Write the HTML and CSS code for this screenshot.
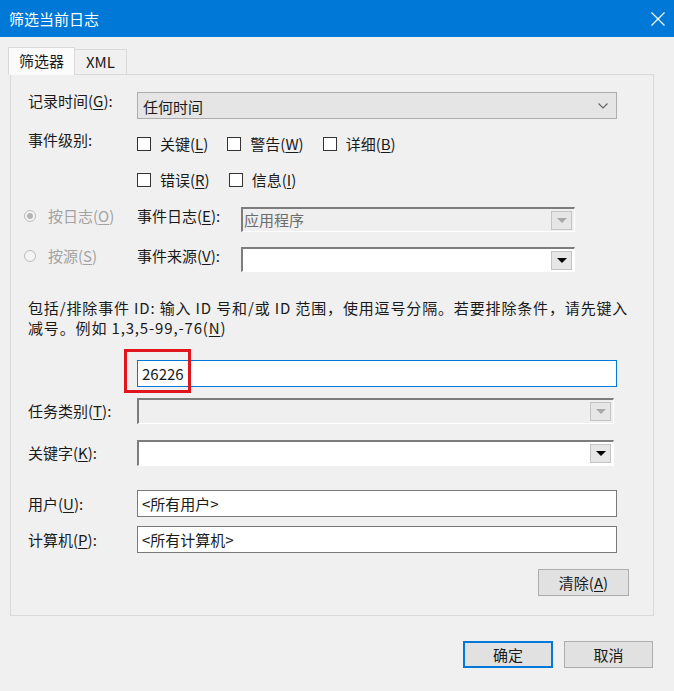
FILE: index.html
```html
<!DOCTYPE html>
<html lang="zh-CN">
<head>
<meta charset="utf-8">
<title>筛选当前日志</title>
<link rel="stylesheet" href="styles.css">
</head>
<body>
<div class="titlebar">
  <span class="title">筛选当前日志</span>
  <svg class="close" width="14" height="14" viewBox="0 0 14 14"><path d="M0.5 0.5 L13.5 13.5 M13.5 0.5 L0.5 13.5" stroke="#fff" stroke-width="1.2" fill="none"/></svg>
</div>
<div class="main">
  <div class="tabs">
    <div class="tab active">筛选器</div>
    <div class="tab">XML</div>
  </div>
  <div class="panel">
    <div class="row row-time">
      <span class="lbl">记录时间(<u>G</u>):</span>
      <div class="select">
        <span>任何时间</span>
        <svg width="10" height="6" viewBox="0 0 10 6"><path d="M0.5 0.5 L5 5 L9.5 0.5" stroke="#666" stroke-width="1.2" fill="none"/></svg>
      </div>
    </div>
    <div class="row row-levels">
      <span class="lbl lbl-levels">事件级别:</span>
      <div class="checks">
        <div class="check-row">
          <span class="check"><span class="box"></span><span>关键(<u>L</u>)</span></span>
          <span class="check"><span class="box"></span><span>警告(<u>W</u>)</span></span>
          <span class="check"><span class="box"></span><span>详细(<u>B</u>)</span></span>
        </div>
        <div class="check-row">
          <span class="check"><span class="box"></span><span>错误(<u>R</u>)</span></span>
          <span class="check"><span class="box"></span><span>信息(<u>I</u>)</span></span>
        </div>
      </div>
    </div>
    <div class="source">
      <div class="srow">
        <span class="radio"><span class="circle checked"></span><span>按日志(<u>O</u>)</span></span>
        <span class="slbl">事件日志(<u>E</u>):</span>
        <div class="combo combo-src disabled">
          <span class="combo-text">应用程序</span>
          <span class="arrow"><svg width="10" height="5" viewBox="0 0 10 5"><path d="M0 0 H10 L5 5 Z" fill="#a8a8a8"/></svg></span>
        </div>
      </div>
      <div class="srow">
        <span class="radio"><span class="circle"></span><span>按源(<u>S</u>)</span></span>
        <span class="slbl">事件来源(<u>V</u>):</span>
        <div class="combo combo-src">
          <span class="combo-text"></span>
          <span class="arrow"><svg width="10" height="5" viewBox="0 0 10 5"><path d="M0 0 H10 L5 5 Z" fill="#000"/></svg></span>
        </div>
      </div>
    </div>
    <p class="hint">包括/排除事件 ID: 输入 ID 号和/或 ID 范围，使用逗号分隔。若要排除条件，请先键入<br>减号。例如 1,3,5-99,-76(<u>N</u>)</p>
    <div class="row row-id">
      <div class="id-wrap">
        <div class="input focused">26226</div>
        <span class="highlight"></span>
      </div>
    </div>
    <div class="row row-task">
      <span class="lbl">任务类别(<u>T</u>):</span>
      <div class="combo combo-wide disabled">
        <span class="combo-text"></span>
        <span class="arrow"><svg width="10" height="5" viewBox="0 0 10 5"><path d="M0 0 H10 L5 5 Z" fill="#a8a8a8"/></svg></span>
      </div>
    </div>
    <div class="row row-keyword">
      <span class="lbl">关键字(<u>K</u>):</span>
      <div class="combo combo-wide">
        <span class="combo-text"></span>
        <span class="arrow"><svg width="10" height="5" viewBox="0 0 10 5"><path d="M0 0 H10 L5 5 Z" fill="#000"/></svg></span>
      </div>
    </div>
    <div class="row row-user">
      <span class="lbl">用户(<u>U</u>):</span>
      <div class="input">&lt;所有用户&gt;</div>
    </div>
    <div class="row row-computer">
      <span class="lbl">计算机(<u>P</u>):</span>
      <div class="input">&lt;所有计算机&gt;</div>
    </div>
    <div class="row row-clear">
      <button class="btn btn-clear">清除(<u>A</u>)</button>
    </div>
  </div>
  <div class="footer">
    <button class="btn btn-ok">确定</button>
    <button class="btn btn-cancel">取消</button>
  </div>
</div>
</body>
</html>
```
FILE: styles.css
```css
* { box-sizing: border-box; }
html, body { margin: 0; padding: 0; }
body {
  width: 674px;
  height: 691px;
  overflow: hidden;
  background: #f0f0f0;
  font-family: "Noto Sans CJK SC", "Noto Sans", sans-serif;
  font-size: 15px;
  line-height: 20px;
  color: #1a1a1a;
}
u { text-decoration: underline; text-underline-offset: 2px; }

.titlebar {
  height: 37px;
  background: #0078d7;
  color: #fff;
  display: flex;
  align-items: center;
  justify-content: space-between;
  padding: 0 9px 0 9px;
}
.title { font-size: 15px; line-height: 20px; }
.close { display: block; }

.main { padding: 10px 20px 0 10px; }

.tabs {
  display: flex;
  align-items: flex-end;
  margin-left: -2px;
  height: 27px;
}
.tab {
  height: 25px;
  padding: 0 11px;
  border: 1px solid #d9d9d9;
  border-left: none;
  border-bottom: none;
  background: #f0f0f0;
  line-height: 24px;
}
.tab.active {
  height: 28px;
  margin-bottom: -1px;
  border-left: 1px solid #d9d9d9;
  padding: 0 10px;
  background: #fbfbfb;
  line-height: 25px;
  position: relative;
  z-index: 1;
}

.panel {
  border: 1px solid #d9d9d9;
  background: #f0f0f0;
  padding: 17px 24px 19px 17px;
  display: flex;
  flex-direction: column;
}

.row { display: flex; align-items: center; }
.lbl { width: 109px; flex: none; white-space: nowrap; }

.row-time { align-items: flex-start; }
.row-time .lbl { line-height: 18px; }
.select {
  width: 480px;
  height: 27px;
  background: #e5e5e5;
  border: 1px solid #adadad;
  display: flex;
  align-items: center;
  justify-content: space-between;
  padding: 0 8px 0 5px;
}
.select span { line-height: 20px; margin-top: 2px; }

.row-levels { margin-top: 14px; align-items: flex-start; }
.lbl-levels { line-height: 14px; }
.checks { display: flex; flex-direction: column; gap: 14px; }
.check-row { display: flex; gap: 19px; }
.check {
  display: flex;
  align-items: center;
  gap: 9px;
  height: 22px;
  white-space: nowrap;
}
.box {
  width: 14px;
  height: 14px;
  border: 1px solid #333;
  background: #fff;
  flex: none;
}

.source {
  margin-top: 16px;
  margin-left: -4px;
  display: flex;
  flex-direction: column;
  gap: 15px;
}
.srow { display: flex; align-items: flex-start; height: 25px; }
.radio {
  width: 113px;
  flex: none;
  display: flex;
  align-items: center;
  gap: 12px;
  color: #a3a3a3;
  line-height: 18px;
  white-space: nowrap;
}
.circle {
  width: 12px;
  height: 12px;
  border: 1px solid #bcbcbc;
  border-radius: 50%;
  background: #f4f4f4;
  display: flex;
  align-items: center;
  justify-content: center;
  flex: none;
}
.circle.checked::after {
  content: "";
  width: 6px;
  height: 6px;
  border-radius: 50%;
  background: #b4b4b4;
}
.slbl { width: 104px; flex: none; line-height: 18px; white-space: nowrap; }

.combo {
  height: 25px;
  display: flex;
  align-items: center;
  justify-content: space-between;
  background: #fff;
  border-top: 2px solid #7d7d7d;
  border-left: 2px solid #7d7d7d;
  border-right: 1px solid #fff;
  border-bottom: 1px solid #fff;
  padding: 0 2px 0 1px;
}
.combo.disabled { background: #efefef; }
.combo-src { width: 334px; }
.combo-wide { width: 477px; height: 26px; }
.combo-text { color: #6d6d6d; line-height: 20px; }
.arrow {
  width: 21px;
  height: 19px;
  border: 1px solid #c4c4c4;
  background: #e6e6e6;
  display: flex;
  align-items: center;
  justify-content: center;
}
.arrow svg { display: block; }

.hint { margin: 26px 0 0 0; line-height: 20px; white-space: nowrap; letter-spacing: 0.85px; }

.row-id { margin-top: 22px; padding-left: 109px; }
.id-wrap { position: relative; }
.input {
  width: 480px;
  height: 27px;
  background: #fff;
  border: 1px solid #7a7a7a;
  padding: 0 4px;
  line-height: 25px;
  white-space: nowrap;
}
.input.focused { border-color: #0078d7; }
.highlight {
  position: absolute;
  left: -13px;
  top: -11px;
  width: 67px;
  height: 44px;
  border: 3px solid #e0161f;
}

.row-task { margin-top: 11px; }
.row-keyword { margin-top: 16px; }
.row-user { margin-top: 24px; }
.row-computer { margin-top: 9px; }
.row-clear { margin-top: 16px; justify-content: flex-end; }

.btn {
  font-family: inherit;
  font-size: 15px;
  color: #1a1a1a;
  background: #e1e1e1;
  border: 1px solid #adadad;
  height: 27px;
  padding: 0;
  line-height: 20px;
}
.btn-clear { width: 91px; }
.footer {
  margin-top: 25px;
  display: flex;
  justify-content: flex-end;
  gap: 11px;
  padding-right: 1px;
}
.btn-ok { width: 90px; border: 2px solid #0078d7; }
.btn-cancel { width: 89px; }
```
